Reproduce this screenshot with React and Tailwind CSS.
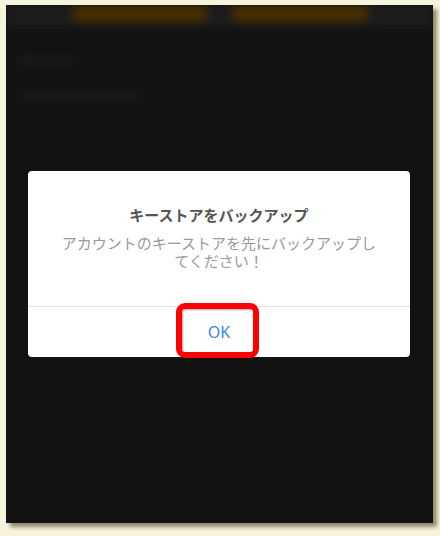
import React from "react";

export default function App() {
    return (
        <div className="w-[440px] h-[536px] bg-[#f7f4de] pt-[5px] pl-[6px] overflow-hidden">
            <div className="relative w-[427px] h-[518px] bg-[#121212] shadow-[4px_4px_4px_rgba(90,80,50,0.65)] overflow-hidden">
                {/* blurred page behind the modal */}
                <div className="blur-[5px]">
                    <div className="h-[22px] bg-[#1c1c1c] flex gap-[25px] pl-[67px]">
                        <div className="w-[134px] h-[16px] bg-[#4a3000] rounded-b" />
                        <div className="w-[136px] h-[16px] bg-[#4a3000] rounded-b" />
                    </div>
                    <div className="px-[12px] pt-[30px] flex flex-col gap-[26px]">
                        <div className="w-[56px] h-[8px] bg-[#1c1c1c]" />
                        <div className="w-[124px] h-[9px] bg-[#1b1b1b]" />
                    </div>
                </div>

                {/* modal */}
                <div className="absolute inset-0 flex items-center justify-center pl-[22px] pr-[23px]">
                    <div className="relative w-full bg-white rounded-[4px] font-['Noto_Sans_CJK_JP',sans-serif]">
                        <div className="px-8 pt-[34px] pb-[36px] text-center">
                            <h2 className="text-[15px] leading-[20px] font-bold text-[#555]">キーストアをバックアップ</h2>
                            <p className="mt-[9px] text-[15px] leading-[18px] text-[#9a9a9a]">
                                アカウントのキーストアを先にバックアップしてください！
                            </p>
                        </div>
                        <div className="border-t border-[#e3e3e3] h-[51px] flex items-center justify-center">
                            <button className="text-[16px] text-[#3d86e8] font-['Noto_Sans',sans-serif]">OK</button>
                        </div>
                        {/* highlight around OK */}
                        <div className="absolute left-[148px] top-[132px] w-[83px] h-[55px] rounded-[9px] border-[6px] border-[#ff0000] shadow-[inset_1px_1px_2px_rgba(0,0,0,0.35)]" />
                    </div>
                </div>
            </div>
        </div>
    );
}
